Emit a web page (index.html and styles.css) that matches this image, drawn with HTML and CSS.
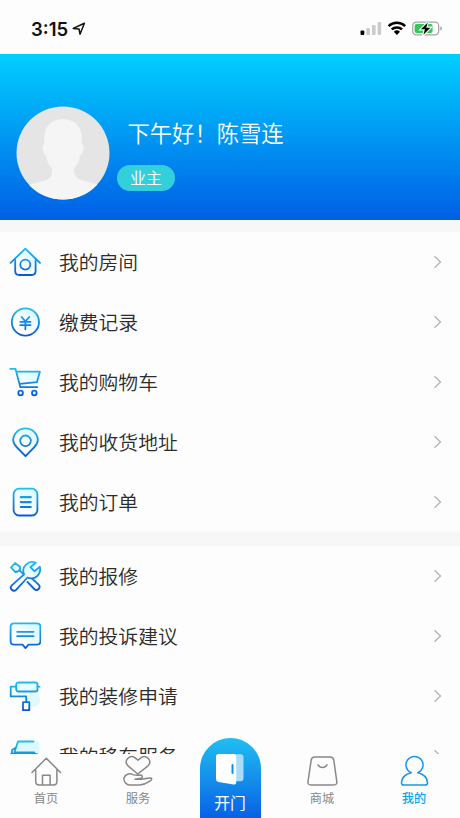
FILE: index.html
```
<!DOCTYPE html>
<html lang="zh-CN">
<head>
<meta charset="utf-8">
<meta name="viewport" content="width=device-width, initial-scale=1">
<title>我的</title>
<link rel="stylesheet" href="styles.css">
</head>
<body>
<svg class="defs" width="0" height="0" aria-hidden="true">
  <defs>
    <linearGradient id="blue" gradientUnits="userSpaceOnUse" x1="0" y1="2" x2="0" y2="30">
      <stop offset="0" stop-color="#20c0ee"/><stop offset="1" stop-color="#0758d6"/>
    </linearGradient>
    <linearGradient id="tint" gradientUnits="userSpaceOnUse" x1="5" y1="28" x2="28" y2="5">
      <stop offset="0.3" stop-color="#fff"/><stop offset="1" stop-color="#d5f8ff"/>
    </linearGradient>
    <symbol id="chevron" viewBox="0 0 10 14"><path d="M1.5 1.2 7.5 7l-6 5.8" fill="none" stroke="#b4b4b4" stroke-width="1.3"/></symbol>
  </defs>
</svg>
<div class="phone">
  <header class="status">
    <span class="time">3:15</span>
    <svg class="locate" width="14" height="14" viewBox="0 0 14 14"><path d="M1.2 6.4 12.4 1.2 8 12.2 7 7Z" fill="none" stroke="#111" stroke-width="1.5" stroke-linejoin="round"/></svg>
    <svg class="signals" width="84" height="18" viewBox="0 0 84 18">
      <rect x="0.5" y="10.5" width="3.8" height="4.5" rx="1" fill="#000"/>
      <rect x="6.3" y="8" width="3.6" height="7" rx="1" fill="#cbcbcb"/>
      <rect x="12" y="5" width="3.6" height="10" rx="1" fill="#cbcbcb"/>
      <rect x="17.6" y="2" width="3.6" height="13" rx="1" fill="#cbcbcb"/>
      <g fill="none" stroke="#000" stroke-width="2.5"><path d="M28.6 6.2a12 12 0 0 1 16.6 0"/><path d="M31.7 9.4a7.7 7.7 0 0 1 10.4 0"/></g>
      <path d="M33.8 11.7a4.6 4.6 0 0 1 6.2 0L36.9 15Z"/>
      <rect x="52.7" y="2.2" width="26" height="12.6" rx="3.7" fill="#fff" stroke="#a5a5a5" stroke-width="1.2"/>
      <rect x="54.6" y="4" width="18" height="9" rx="2" fill="#34c759"/>
      <path d="M80.3 6.3c2.3.7 2.3 3.7 0 4.4Z" fill="#a5a5a5"/>
      <path d="M67.8 2.5 60.9 9.3h4l-1.5 5.4 7-7h-4.2Z" fill="#000" stroke="#fff" stroke-width="2.2" paint-order="stroke"/>
    </svg>
  </header>

  <section class="profile">
    <svg class="avatar" width="94" height="94" viewBox="0 0 94 94">
      <clipPath id="round"><circle cx="47" cy="47" r="46.5"/></clipPath>
      <g clip-path="url(#round)">
        <path d="M0 0h94v94H0z" fill="#e5e5e5"/>
        <path d="M47 13.2c-12 0-18.8 7.5-18.8 19v6c-2.6 0-2.3 9 1.8 11.5 1.2 6.3 3 9.5 5.8 12.5 1.3 9-2.4 11.2-10.8 13.3C18 77.500 14 78 9.500 81v14h77V81c-5-3.300-10-4-16-5.500-9-2.200-13.500-4.500-12.300-13.300 3-3.200 5-6.200 5.800-12.500 4-2.500 4.800-11.500 1.800-11.500v-6c0-11.500-6.800-19-18.800-19Z" fill="#f5f5f5"/>
      </g>
    </svg>
    <div class="who">
      <h1 class="greeting">下午好！陈雪连</h1>
      <span class="role">业主</span>
    </div>
  </section>

  <main class="lists">
    <ul class="group">
      <li class="row"><svg class="icon" viewBox="0 0 32 32"><path d="M5 13.500 16.300 3 28 13.500V25q0 4-4 4H9.500q-4 0-4-4V13.500Z" fill="url(#tint)"/><g class="line"><path d="M1.600 16.800 16.300 2.700 31 16.800"/><path d="M6.200 14v11q0 4 4 4h12.400q4 0 4-4V14"/><circle cx="16.300" cy="18.600" r="5"/></g></svg><span class="label">我的房间</span><svg class="chevron"><use href="#chevron"/></svg></li>
      <li class="row"><svg class="icon" viewBox="0 0 32 32"><g class="line"><circle cx="16.400" cy="16" r="13.600" fill="url(#tint)"/><path d="m12.500 11 3.900 4.300 3.900-4.300M11.200 15.800h10.400M11.200 19.200h10.400M16.400 15.300v8"/></g></svg><span class="label">缴费记录</span><svg class="chevron"><use href="#chevron"/></svg></li>
      <li class="row"><svg class="icon" viewBox="0 0 32 32"><path d="M8 6h23l-3 11H10Z" fill="url(#tint)"/><g class="line"><path d="M1.200 2.800h5.200l5 18.400h16.900M7.400 5.700h23.500l-2.900 10.400-17.500 1.800"/><circle cx="11.600" cy="27" r="2.300"/><circle cx="25.300" cy="27" r="2.300"/></g></svg><span class="label">我的购物车</span><svg class="chevron"><use href="#chevron"/></svg></li>
      <li class="row"><svg class="icon" viewBox="0 0 32 32"><g class="line"><path d="M16.500 30.200 8 21.500C4.800 18.400 4.200 16.500 4.200 14a12.300 11.600 0 0 1 24.600 0c0 2.500-.6 4.400-3.800 7.500Z" fill="url(#tint)"/><circle cx="16.500" cy="14.800" r="5.300" fill="#fff"/></g></svg><span class="label">我的收货地址</span><svg class="chevron"><use href="#chevron"/></svg></li>
      <li class="row"><svg class="icon" viewBox="0 0 32 32"><g class="line"><rect x="4.600" y="2.700" width="23.800" height="26.800" rx="5.500" fill="url(#tint)"/><path d="M11.800 11.200h9.900M11.800 16.100h9.900M11.800 21h9.900" stroke-width="2.200"/></g></svg><span class="label">我的订单</span><svg class="chevron"><use href="#chevron"/></svg></li>
    </ul>
    <ul class="group">
      <li class="row"><svg class="icon" viewBox="0 0 32 32"><g class="line"><path d="M8.700 11.500 6.300 12 2 7.500 6 3l5 3.800v3.500Z" fill="#e4fbff"/><path d="m10.200 10.200 5 4.600"/><path d="m18.500 22 6.800 7a3 3 0 0 0 4.300-4.300L23 18.500"/><path d="M26.800 2.800a8.800 8.800 0 0 0-11.700 11.600L2.800 25.300c-3 3.200 1.500 7.100 4.300 4.500L18.500 17.500c7 3 14.300-2.700 12.300-10.800l-5.400 4.500-4-4Z" fill="url(#tint)"/></g></svg><span class="label">我的报修</span><svg class="chevron"><use href="#chevron"/></svg></li>
      <li class="row"><svg class="icon" viewBox="0 0 32 32"><g class="line"><path d="M5 3.400h23q3.400 0 3.400 3.400v14.400q0 3.400-3.400 3.400h-8.500l-3 3.500-3-3.500H5q-3.400 0-3.400-3.400V6.800q0-3.400 3.400-3.400Z" fill="url(#tint)"/><path d="M8.200 11.800h16.400M8.200 16.200h16.400"/></g></svg><span class="label">我的投诉建议</span><svg class="chevron"><use href="#chevron"/></svg></li>
      <li class="row"><svg class="icon" viewBox="0 0 32 32"><circle cx="24" cy="20" r="7" fill="#dff9ff"/><g class="line"><rect x="7.200" y="2.500" width="21.300" height="9" rx="2" fill="#e9fcff"/><path d="M28.500 6.700h2M7 6.700H1.700v9.600h15.500v5.800"/><rect x="14" y="22.200" width="6.300" height="8" fill="#fff"/></g></svg><span class="label">我的装修申请</span><svg class="chevron"><use href="#chevron"/></svg></li>
      <li class="row"><svg class="icon" viewBox="0 0 32 32"><path d="M9 1h20q2 2 1.500 12H5Z" fill="#ddf9ff"/><g class="line"><path d="M24.500 1.500H9L5.300 12.500h20M6 8 3 10v3l-2 2"/><rect x="2" y="14" width="27" height="12" rx="2"/></g></svg><span class="label">我的移车服务</span><svg class="chevron"><use href="#chevron"/></svg></li>
    </ul>
  </main>

  <nav class="tabs">
    <a class="tab"><svg class="tab-icon" viewBox="0 0 32 32"><path d="M2 17.500 16.300 3.300 30.500 17.500M5.700 14.500v12q0 3.500 3.500 3.500h14.200q3.500 0 3.500-3.500v-12M12.500 29.800V20.300h7.600v9.500"/></svg><span class="tab-name">首页</span></a>
    <a class="tab"><svg class="tab-icon" viewBox="0 0 32 32"><path d="M15.800 19 6 10.800C1 5.500 8-.8 12.800 2.600L16 5.200l3.200-2.600C24 -.8 31 5.500 26 10.800ZM2 23c1-4 5.500-5 9-3.400 2.500 1 4.500.7 7 .5 3 0 3.200 2.600.5 3.200l-5.500.9h6.500c3.500-.2 6.500-1.500 9.200-1.200 1.600.4 1 1.800-.2 2.700-3.500 2.300-5.500 4.300-11 4.300H8C4.500 30 1.500 27 2 23Z"/></svg><span class="tab-name">服务</span></a>
    <a class="tab door">
      <svg class="door-icon" width="30" height="32" viewBox="0 0 30 32"><rect x="16" y="1.300" width="12.500" height="27" rx="3" fill="#a8dcfa"/><path d="M3.500 1h15.200q2.500 0 2.500 2.500v26q0 2.500-2.500 1.900L3.300 28.900Q1 28.500 1 26V3.500Q1 1 3.500 1Z" fill="#fff"/><path d="M17.500 12v8" stroke="#0794e8" stroke-width="2" stroke-linecap="round"/></svg>
      <span class="door-name">开门</span>
    </a>
    <a class="tab"><svg class="tab-icon" viewBox="0 0 32 32"><path d="M8.800 2h15.400q3 0 3.600 3l3 21.500q.4 3.500-3 3.500H5q-3.400 0-3-3.500L5.200 5q.6-3 3.600-3ZM12 9.800c2 3.500 7 3.500 9 0"/></svg><span class="tab-name">商城</span></a>
    <a class="tab active"><svg class="tab-icon" viewBox="0 0 32 32"><path d="M13.200 17.800a8.500 8.500 0 1 1 6.600 0c6 1.300 9.200 4.700 9.700 9.700q.2 2.500-2.300 2.500H5.800q-2.500 0-2.300-2.500c.5-5 3.700-8.400 9.700-9.700Z"/></svg><span class="tab-name">我的</span></a>
  </nav>
</div>
</body>
</html>
```
FILE: styles.css
```
* { box-sizing: border-box; }
body {
  margin: 0;
  background: #fdfdfd;
  color: #2c2c2c;
  font-family: "Noto Sans CJK SC", sans-serif;
}
.defs { position: absolute; }
.phone {
  display: flex;
  flex-direction: column;
  width: 460px;
  height: 818px;
  overflow: hidden;
}
.status {
  flex: none;
  display: flex;
  align-items: center;
  height: 54px;
  padding: 4px 17px 0 31px;
}
.time {
  font: 600 18.5px/24px Inter, sans-serif;
  color: #111;
}
.locate { margin: 0 0 1px 4px; }
.signals { margin: 0 -1px 0 auto; }
.profile {
  flex: none;
  display: flex;
  height: 165.500px;
  padding: 52px 16px 0;
  background: linear-gradient(#00cfff, #005fe6);
}
.avatar { flex: none; }
.who {
  display: flex;
  flex-direction: column;
  align-items: flex-start;
  padding: 11px 0 0 7px;
}
.greeting {
  margin: 0 0 0 10.500px;
  font-size: 22.300px;
  font-weight: 350;
  line-height: 30px;
  color: #fff;
}
.role {
  width: 58px;
  height: 26px;
  margin-top: 17.500px;
  border-radius: 13px;
  background: #33d0dc;
  color: #fff;
  font-size: 16px;
  font-weight: 350;
  line-height: 25px;
  text-align: center;
}
.lists {
  flex: 1;
  display: flex;
  flex-direction: column;
  gap: 14px;
  min-height: 0;
  padding-top: 12.500px;
  overflow: hidden;
  background: #f7f7f7;
}
.group {
  flex: none;
  margin: 0;
  padding: 0;
  list-style: none;
  background: #fdfdfd;
}
.row {
  display: flex;
  align-items: center;
  height: 60px;
  padding: 0 17px 0 9px;
}
.icon { width: 32px; height: 32px; }
.line {
  fill: none;
  stroke: url(#blue);
  stroke-width: 1.800;
  stroke-linecap: round;
  stroke-linejoin: round;
}
.label {
  flex: 1;
  margin-left: 18px;
  font-size: 19.800px;
  font-weight: 350;
  line-height: 30px;
}
.chevron { width: 10px; height: 14px; }
.tabs {
  flex: none;
  display: grid;
  grid-template-columns: repeat(5, 1fr);
  grid-template-rows: 64.500px;
  align-items: end;
  height: 64.500px;
  background: #fdfdfd;
}
.tab {
  display: flex;
  flex-direction: column;
  align-items: center;
  height: 64.500px;
  color: #888;
}
.tab-icon {
  width: 32px;
  height: 32px;
  margin-top: 1.500px;
  fill: none;
  stroke: currentColor;
  stroke-width: 1.500;
  stroke-linejoin: round;
  stroke-linecap: round;
}
.tab-name {
  margin-top: 2px;
  font-size: 12.200px;
  line-height: 18px;
}
.active { color: #1296f0; }
.active .tab-name { color: #07a5f0; font-weight: 500; }
.door {
  justify-self: center;
  width: 61px;
  height: 80px;
  padding-top: 15px;
  border-radius: 30.500px 30.500px 0 0;
  background: linear-gradient(#20bff2, #0761e5);
  color: #fff;
}
.door-name {
  margin-top: 7px;
  font-size: 15.800px;
  line-height: 22px;
}
```
